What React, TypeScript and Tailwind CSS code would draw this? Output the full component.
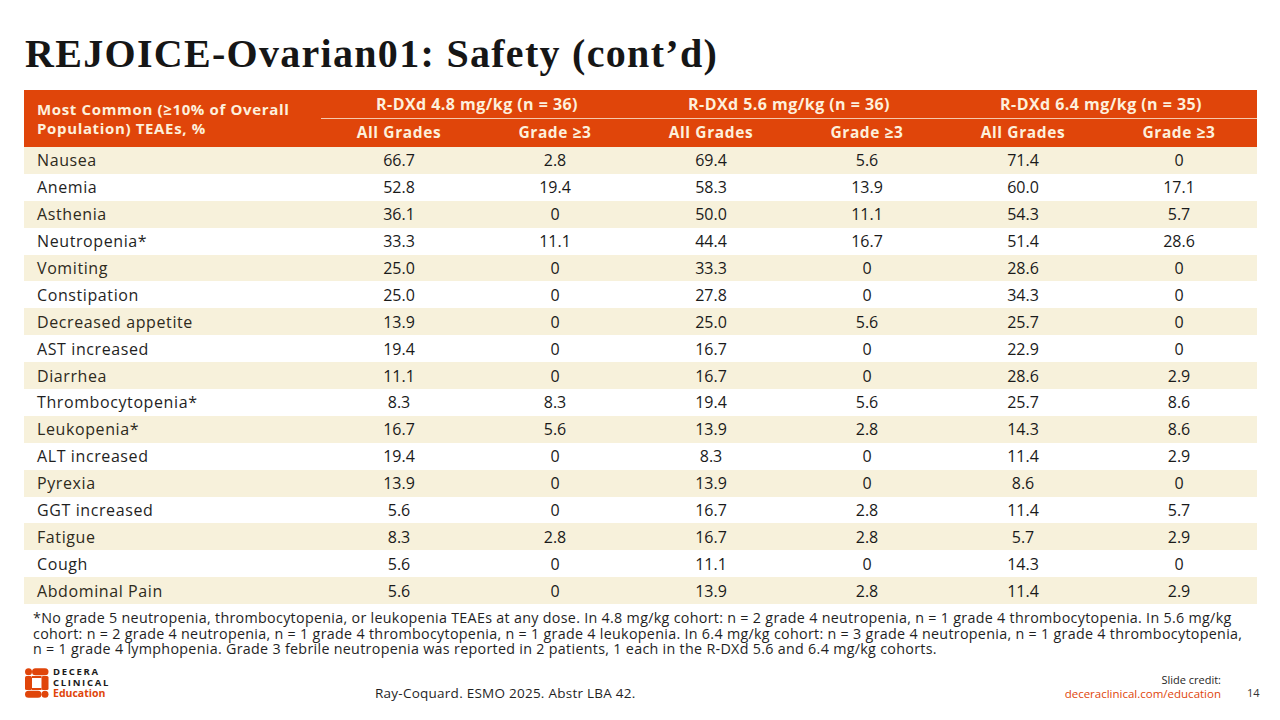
import React from "react";

// ------------------------
const ROWS: [string, string[]][] = [
  ["Nausea", ["66.7", "2.8", "69.4", "5.6", "71.4", "0"]],
  ["Anemia", ["52.8", "19.4", "58.3", "13.9", "60.0", "17.1"]],
  ["Asthenia", ["36.1", "0", "50.0", "11.1", "54.3", "5.7"]],
  ["Neutropenia*", ["33.3", "11.1", "44.4", "16.7", "51.4", "28.6"]],
  ["Vomiting", ["25.0", "0", "33.3", "0", "28.6", "0"]],
  ["Constipation", ["25.0", "0", "27.8", "0", "34.3", "0"]],
  ["Decreased appetite", ["13.9", "0", "25.0", "5.6", "25.7", "0"]],
  ["AST increased", ["19.4", "0", "16.7", "0", "22.9", "0"]],
  ["Diarrhea", ["11.1", "0", "16.7", "0", "28.6", "2.9"]],
  ["Thrombocytopenia*", ["8.3", "8.3", "19.4", "5.6", "25.7", "8.6"]],
  ["Leukopenia*", ["16.7", "5.6", "13.9", "2.8", "14.3", "8.6"]],
  ["ALT increased", ["19.4", "0", "8.3", "0", "11.4", "2.9"]],
  ["Pyrexia", ["13.9", "0", "13.9", "0", "8.6", "0"]],
  ["GGT increased", ["5.6", "0", "16.7", "2.8", "11.4", "5.7"]],
  ["Fatigue", ["8.3", "2.8", "16.7", "2.8", "5.7", "2.9"]],
  ["Cough", ["5.6", "0", "11.1", "0", "14.3", "0"]],
  ["Abdominal Pain", ["5.6", "0", "13.9", "2.8", "11.4", "2.9"]],
];

const GROUPS = ["R-DXd 4.8 mg/kg (n = 36)", "R-DXd 5.6 mg/kg (n = 36)", "R-DXd 6.4 mg/kg (n = 35)"];

const sans = { fontFamily: "'Open Sans', Lato, sans-serif" };

// ------------------------
const Logo = () => (
  <svg width="24" height="30" viewBox="0 0 24 30" aria-hidden>
    <g fill="#e0450a">
      <circle cx="3.5" cy="3.8" r="3.5" />
      <rect x="7" y="0.3" width="16.5" height="7" rx="3.5" />
      <rect x="0" y="8" width="7" height="14" rx="1.5" />
      <rect x="16.5" y="8" width="7" height="14" rx="1.5" />
      <rect x="7" y="8" width="9.5" height="2" />
      <rect x="7" y="20" width="9.5" height="2" />
      <rect x="0" y="22.7" width="16.5" height="7" rx="3.5" />
      <circle cx="20" cy="26.2" r="3.5" />
    </g>
  </svg>
);

// ------------------------
export default function App() {
  return (
    <div className="w-[1280px] h-[720px] bg-white relative overflow-hidden text-[#1f1f1f]" style={sans}>
      <h1
        className="pl-[25px] pt-[31px] text-[40px] leading-[46px] font-bold text-[#161616] tracking-[1.3px]"
        style={{ fontFamily: "'Liberation Serif', 'Times New Roman', serif" }}
      >
        REJOICE-Ovarian01: Safety (cont’d)
      </h1>

      <div className="ml-[24px] mt-[13px] w-[1233px]">
        {/* header */}
        <div className="grid grid-cols-[297px_repeat(6,156px)] bg-[#e0450a] text-[#fdf0dc] font-bold">
          <div className="row-span-3 flex items-center pl-[13px] text-[15px] leading-[19px] tracking-[0.65px]">
            Most Common (≥10% of Overall
            <br />
            Population) TEAEs, %
          </div>
          {GROUPS.map((g) => (
            <div key={g} className="col-span-2 h-[28px] flex items-center justify-center text-[16px] tracking-[0.45px]">
              {g}
            </div>
          ))}
          <div className="col-span-6 h-px bg-[#f6c9ad]" />
          {[0, 1, 2].map((i) => (
            <React.Fragment key={i}>
              <div className="h-[28px] flex items-center justify-center text-[15.5px] tracking-[0.6px]">All Grades</div>
              <div className="h-[28px] flex items-center justify-center text-[15.5px] tracking-[0.6px]">Grade ≥3</div>
            </React.Fragment>
          ))}
        </div>

        {/* body */}
        {ROWS.map(([name, vals], idx) => (
          <div
            key={name}
            className={`grid grid-cols-[297px_repeat(6,156px)] h-[26.9px] items-center text-[16px] ${
              idx % 2 === 0 ? "bg-[#f7f1db] text-[#2e2a1c]" : "bg-white text-[#1f1f1f]"
            }`}
          >
            <div className="pl-[13px] tracking-[0.6px]">{name}</div>
            {vals.map((v, j) => (
              <div key={j} className="text-center text-[#1a1a1a]">
                {v}
              </div>
            ))}
          </div>
        ))}
      </div>

      <p className="pl-[33px] pt-[6px] text-[14.3px] leading-[15.5px] text-[#1f1f1f] tracking-[0.3px] whitespace-nowrap">
        *No grade 5 neutropenia, thrombocytopenia, or leukopenia TEAEs at any dose. In 4.8 mg/kg cohort: n = 2 grade 4 neutropenia, n = 1 grade 4 thrombocytopenia. In 5.6 mg/kg
        <br />
        cohort: n = 2 grade 4 neutropenia, n = 1 grade 4 thrombocytopenia, n = 1 grade 4 leukopenia. In 6.4 mg/kg cohort: n = 3 grade 4 neutropenia, n = 1 grade 4 thrombocytopenia,
        <br />
        n = 1 grade 4 lymphopenia. Grade 3 febrile neutropenia was reported in 2 patients, 1 each in the R-DXd 5.6 and 6.4 mg/kg cohorts.
      </p>

      <div className="absolute left-[25px] top-[667px] flex items-center gap-[4px]">
        <Logo />
        <div className="text-[9.5px] leading-[10.5px] font-bold tracking-[1.7px] text-[#1a1a1a]">
          <div>DECERA</div>
          <div>CLINICAL</div>
          <div className="text-[#e0450a] tracking-normal text-[10.5px]">Education</div>
        </div>
      </div>

      <div className="absolute left-[375px] top-[683px] text-[13.5px] tracking-[0.25px] text-[#1f1f1f]">
        Ray-Coquard. ESMO 2025. Abstr LBA 42.
      </div>

      <div className="absolute right-[59px] top-[673px] text-right text-[11px] leading-[14px]">
        <div className="text-[#1f1f1f]">Slide credit:</div>
        <div className="text-[#e0450a] text-[11.5px]">deceraclinical.com/education</div>
      </div>
      <div className="absolute left-[1247px] top-[685px] text-[11px] text-[#333]">14</div>
    </div>
  );
}
